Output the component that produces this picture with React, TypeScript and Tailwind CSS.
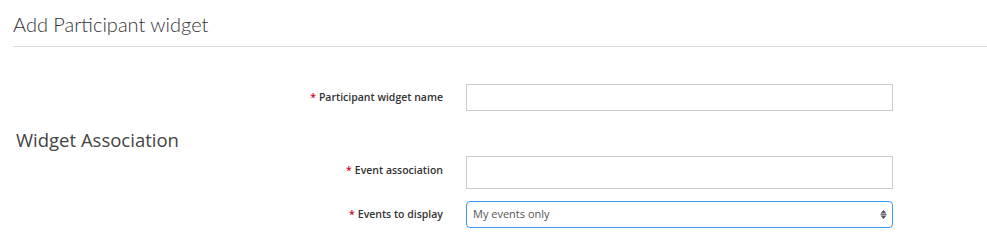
import React from "react";

function Label({ text, up = 0 }: { text: string; up?: number }) {
  return (
    <div className="w-[443px] shrink-0 text-right text-[10.5px] font-semibold text-[#333] leading-none" style={{ marginTop: -up * 2 }}>
      <span className="text-[#d0021b] mr-[3px]">*</span>
      {text}
    </div>
  );
}

export default function App() {
  return (
    <div className="w-[987px] h-[241px] bg-white overflow-hidden" style={{ fontFamily: '"Open Sans", "Liberation Sans", sans-serif' }}>
      <div className="ml-[13px] border-b border-[#dcdcdc] h-[47px] flex items-start">
        <h1 className="mt-[12px] text-[20px] font-light text-[#333] leading-[24px]" style={{ fontFamily: 'Lato, "Open Sans", sans-serif' }}>
          Add Participant widget
        </h1>
      </div>
      <div className="pt-[37px]">
        <div className="flex items-center h-[27px]">
          <Label text="Participant widget name" />
          <div className="ml-[23px] w-[427px] h-[27px] border border-[#cccccc] bg-white" />
        </div>
        <div className="mt-[16px] pl-[16px] text-[18.5px] text-[#444] leading-[26px]">Widget Association</div>
        <div className="mt-[3px] flex items-center h-[33px]">
          <Label text="Event association" up={2} />
          <div className="ml-[23px] w-[427px] h-[33px] border border-[#cccccc] bg-white" />
        </div>
        <div className="mt-[12px] flex items-center h-[27px]">
          <Label text="Events to display" />
          <div className="ml-[23px] w-[427px] h-[27px] border border-[#3b99fc] rounded-[4px] bg-white flex items-center justify-between pl-[6px] pr-[5px]">
            <span className="text-[11px] text-[#555]">My events only</span>
            <svg width="7" height="11" viewBox="0 0 7 11">
              <path d="M3.5 1 L6.5 4.5 L0.5 4.5 Z" fill="#555" />
              <rect x="0.5" y="5.2" width="6" height="0.8" fill="#555" />
              <path d="M0.5 6.5 L6.5 6.5 L3.5 10 Z" fill="#555" />
            </svg>
          </div>
        </div>
      </div>
    </div>
  );
}
